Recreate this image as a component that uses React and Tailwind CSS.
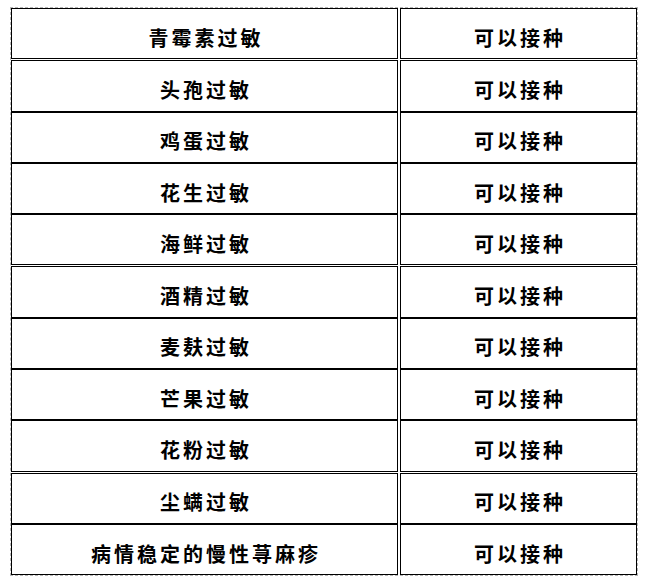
const groups = [
  ["青霉素过敏"],
  ["头孢过敏", "鸡蛋过敏", "花生过敏", "海鲜过敏"],
  ["酒精过敏", "麦麸过敏", "芒果过敏", "花粉过敏"],
  ["尘螨过敏", "病情稳定的慢性荨麻疹"],
];

function Cell({ text, className }) {
  return (
    <div
      className={`flex items-center justify-center border border-black pt-[8px] text-[20px] font-bold tracking-[3px] text-black ${className}`}
    >
      <span className="pl-[3px]">{text}</span>
    </div>
  );
}

export default function App() {
  return (
    <div
      className="min-h-screen bg-white pl-[10px] pt-[7px]"
      style={{ fontFamily: '"Noto Sans CJK SC", "Noto Sans", sans-serif' }}
    >
      <div className="flex w-[628px] flex-col gap-[1px] border border-dashed border-[#b5b5b5]">
        {groups.map((rows, gi) => (
          <div key={gi} className="flex flex-col">
            {rows.map((name) => (
              <div key={name} className="flex h-[51.3px] gap-[2px]">
                <Cell text={name} className="w-[387px]" />
                <Cell text="可以接种" className="w-[237px]" />
              </div>
            ))}
          </div>
        ))}
      </div>
    </div>
  );
}
